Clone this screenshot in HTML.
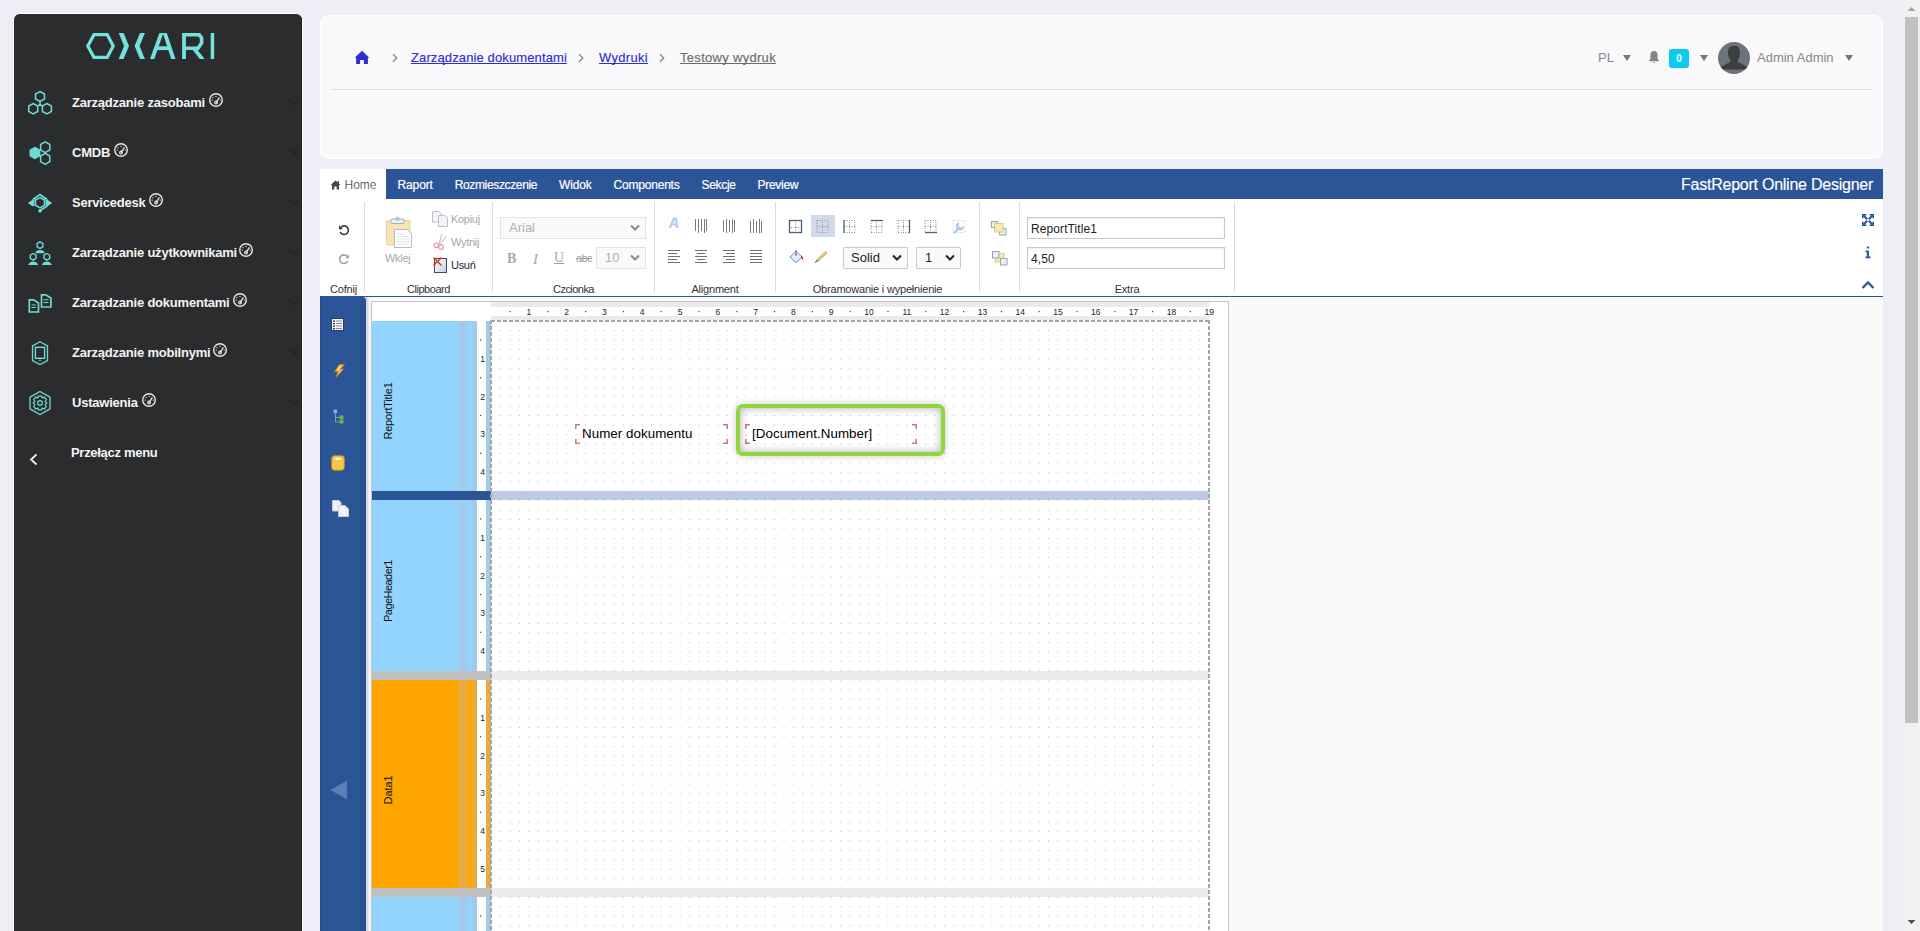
<!DOCTYPE html>
<html><head><meta charset="utf-8">
<style>
*{box-sizing:border-box;margin:0;padding:0}
html,body{width:1920px;height:931px;overflow:hidden;background:#eeeef6;font-family:"Liberation Sans",sans-serif;position:relative}
.a{position:absolute}
#sb{left:13px;top:13px;width:290px;height:930px;background:#2b2c2e;border:1px solid #fff;border-right:1px solid #fff;border-radius:7px 7px 0 0;overflow:hidden}
#sb .edge{position:absolute;right:0;top:0;width:1px;height:100%;background:#232426}
.mi{position:absolute;left:72px;color:#f4f4f4;font-weight:bold;font-size:13px;letter-spacing:-0.22px;white-space:nowrap}
.chev{position:absolute;left:276px;width:9px;height:9px;border-right:2px solid #222427;border-bottom:2px solid #222427;transform:rotate(45deg)}
#hdr{left:320px;top:15px;width:1563px;height:144px;background:#f9f9fc;border:1px solid #fff;border-radius:8px}
#tb{left:320px;top:169px;width:1563px;height:30px;background:#2b5597}
#rb{left:320px;top:199px;width:1563px;height:98px;background:#fff;border-bottom:1px solid #2b5597}
#ds{left:320px;top:297px;width:1563px;height:634px;background:#f9f9f9}
#scr{left:1903px;top:0;width:17px;height:931px;background:#f1f1f1}
.bc{font-size:13px;line-height:13px;color:#2d2dd3;text-decoration:underline;text-underline-offset:1.3px;-webkit-text-stroke:0.15px currentColor;white-space:nowrap;letter-spacing:0.12px}
.hdt{font-size:13px;line-height:13px;color:#878787;white-space:nowrap}
.tri{width:0;height:0;border-left:4px solid transparent;border-right:4px solid transparent;border-top:6px solid #777}
.tab{top:178px;font-size:12px;line-height:14px;color:#fff;-webkit-text-stroke:0.2px #fff;letter-spacing:-0.3px;white-space:nowrap}
.sep{top:202px;width:1px;height:90px;background:#dcdcdc}
.lbl{top:283px;font-size:11px;line-height:13px;color:#333;text-align:center;letter-spacing:-0.2px;white-space:nowrap}
.rbt{font-size:11px;line-height:13px;letter-spacing:-0.3px;white-space:nowrap}
.bc{text-decoration-skip-ink:none}
.sel{border:1px solid #e3e3e3;background:#fafafa;font-size:13px;line-height:20px;white-space:nowrap}
.sel2{border:1px solid #c9c9c9;background:#fafafa;font-size:13px;line-height:20px;color:#222;white-space:nowrap;border-radius:1px}
.inp{width:198px;height:22px;border:1px solid #c8c8c8;background:#fff;font-size:12px;line-height:22px;letter-spacing:0.1px;padding-left:3px;color:#222;box-shadow:inset 0 1px 2px rgba(0,0,0,0.08)}
.bl{font-size:11px;line-height:14px;color:#111;text-align:center;transform:rotate(-90deg);white-space:nowrap}
.obj{font-size:13.33px;line-height:16px;color:#000;white-space:nowrap;letter-spacing:0.06px}
</style></head><body>
<div id="sb" class="a"><div class="edge"></div></div>
<svg class="a" style="left:80px;top:25px" width="140" height="45" viewBox="0 0 140 45">
<g fill="#73e2dc">
<path d="M7.8,21 L14,9.6 H27.2 L33.2,21 L27.2,32.4 H14 Z" fill="none" stroke="#73e2dc" stroke-width="3.3" stroke-linejoin="miter"/>
<polygon points="38.7,8 43.6,8 49,21 43.6,34 38.7,34 44,21"/>
<polygon points="64.9,8 60,8 54.6,21 60,34 64.9,34 59.6,21"/>
<polygon points="79.4,8 83.4,8 74.3,34 70,34"/>
<polygon points="82.8,8 86.8,8 95.5,34 91.2,34"/>
<rect x="76.2" y="21.3" width="13.6" height="3.8"/>
<rect x="102.1" y="8" width="3.8" height="26"/>
<path d="M104,9.8 H119.2 L121.6,12.8 V18 L118,23.2 H104" fill="none" stroke="#73e2dc" stroke-width="3.6"/>
<polygon points="112.8,25 117.6,25 124.7,34 119.7,34"/>
<rect x="130.7" y="8" width="3.5" height="26"/>
</g></svg>
<!-- menu icons -->
<svg class="a" style="left:0;top:80px" width="60" height="400" viewBox="0 80 60 400" fill="none" stroke="#6fd9d4" stroke-width="1.5">
<!-- resources -->
<path d="M40,91.5 L44.5,94 V99 L40,101.5 L35.5,99 V94 Z"/>
<path d="M33.2,103.5 L37.7,106 V111.5 L33.2,114 L28.7,111.5 V106 Z"/>
<path d="M46.9,103.5 L51.4,106 V111.5 L46.9,114 L42.4,111.5 V106 Z"/>
<path d="M40,101.5 V104.5 M37.7,106 L40,104.5 L42.4,106"/>
<!-- cmdb -->
<path d="M34.9,147.5 L39.6,150.2 V155.8 L34.9,158.5 L30.2,155.8 V150.2 Z" fill="#6fd9d4"/>
<path d="M45.2,141.8 L49.8,144.5 V150 L45.2,152.7 L40.6,150 V144.5 Z"/>
<path d="M45.2,153.3 L49.8,156 V161.6 L45.2,164.3 L40.6,161.6 V156 Z"/>
<!-- servicedesk -->
<path d="M31.5,212 M33.5,206 V199 L40,194.5 L46.5,199 V206.5 L40,210.5" stroke-width="1.8"/>
<path d="M40,197.5 L44.5,200 V205.2 L40,207.8 L35.5,205.2 V200 Z"/>
<path d="M27.8,203 L33,199.5 V206.5 Z M52.2,203 L47,199.5 V206.5 Z" fill="#6fd9d4" stroke="none"/>
<circle cx="40" cy="211" r="1.8" fill="#6fd9d4" stroke="none"/>
<!-- users -->
<path d="M40,241.79999999999998 L42.85,243.45 V246.75 L40,248.4 L37.15,246.75 V243.45 Z" stroke-width="1.4"/><path d="M34.9,253.2 Q36.5,249.9 40,249.9 Q43.5,249.9 45.1,253.2 Z" fill="#6fd9d4" stroke="none"/><path d="M33.2,253.5 L36.050000000000004,255.15 V258.45 L33.2,260.1 L30.35,258.45 V255.15 Z" stroke-width="1.4"/><path d="M28.1,265 Q29.700000000000003,261.6 33.2,261.6 Q36.7,261.6 38.300000000000004,265 Z" fill="#6fd9d4" stroke="none"/><path d="M46.8,253.5 L49.65,255.15 V258.45 L46.8,260.1 L43.949999999999996,258.45 V255.15 Z" stroke-width="1.4"/><path d="M41.699999999999996,265 Q43.3,261.6 46.8,261.6 Q50.3,261.6 51.9,265 Z" fill="#6fd9d4" stroke="none"/>
<!-- documents -->
<path d="M29.3,299.8 H33.5 L38.5,303 V312 H29.3 Z" stroke-width="1.7"/>
<path d="M31.5,305 H36 M31.5,307.5 H36" stroke-width="1.1"/>
<path d="M41.5,294.8 H45.7 L50.9,298 V307 H41.5 Z" stroke-width="1.7"/>
<path d="M43.5,299.8 H48.5 M43.5,302.5 H48.5" stroke-width="1.1"/>
<!-- mobile -->
<path d="M40,341.8 L47.5,346 V360.5 L40,364.5 L32.5,360.5 V346 Z" stroke-width="1.3"/>
<rect x="35.4" y="347.3" width="9.2" height="11" stroke-width="1.4"/>
<circle cx="40" cy="360.3" r="0.9" fill="#6fd9d4" stroke="none"/>
<!-- settings -->
<path d="M40,391.5 L50,397.2 V408.8 L40,414.5 L30,408.8 V397.2 Z" stroke-width="1.3"/>
<circle cx="40" cy="403" r="2.3" stroke-width="1.2"/>
<path d="M38.3,396.2 L41.7,396.2 L42.3,398 L44.2,397 L46.3,399.5 L45.2,401.3 L46.8,403 L45.2,404.7 L46.3,406.5 L44.2,409 L42.3,408 L41.7,409.8 L38.3,409.8 L37.7,408 L35.8,409 L33.7,406.5 L34.8,404.7 L33.2,403 L34.8,401.3 L33.7,399.5 L35.8,397 L37.7,398 Z" stroke-width="1.2"/>
<!-- toggle -->
<path d="M36.5,454.5 L31,459.5 L36.5,464.5" stroke="#f0f0f0" stroke-width="1.8"/>
</svg>
<svg class="a" style="left:288px;top:98px" width="12" height="9" viewBox="0 0 12 9"><path d="M1.5,2 L6,6.5 L10.5,2" fill="none" stroke="#232528" stroke-width="1.8"/></svg><svg class="a" style="left:288px;top:148px" width="12" height="9" viewBox="0 0 12 9"><path d="M1.5,2 L6,6.5 L10.5,2" fill="none" stroke="#232528" stroke-width="1.8"/></svg><svg class="a" style="left:288px;top:198px" width="12" height="9" viewBox="0 0 12 9"><path d="M1.5,2 L6,6.5 L10.5,2" fill="none" stroke="#232528" stroke-width="1.8"/></svg><svg class="a" style="left:288px;top:248px" width="12" height="9" viewBox="0 0 12 9"><path d="M1.5,2 L6,6.5 L10.5,2" fill="none" stroke="#232528" stroke-width="1.8"/></svg><svg class="a" style="left:288px;top:298px" width="12" height="9" viewBox="0 0 12 9"><path d="M1.5,2 L6,6.5 L10.5,2" fill="none" stroke="#232528" stroke-width="1.8"/></svg><svg class="a" style="left:288px;top:348px" width="12" height="9" viewBox="0 0 12 9"><path d="M1.5,2 L6,6.5 L10.5,2" fill="none" stroke="#232528" stroke-width="1.8"/></svg><svg class="a" style="left:288px;top:398px" width="12" height="9" viewBox="0 0 12 9"><path d="M1.5,2 L6,6.5 L10.5,2" fill="none" stroke="#232528" stroke-width="1.8"/></svg>
<div class="mi" style="top:95px">Zarządzanie zasobami</div>
<div class="mi" style="top:145px">CMDB</div>
<div class="mi" style="top:195px">Servicedesk</div>
<div class="mi" style="top:245px">Zarządzanie użytkownikami</div>
<div class="mi" style="top:295px">Zarządzanie dokumentami</div>
<div class="mi" style="top:345px">Zarządzanie mobilnymi</div>
<div class="mi" style="top:395px">Ustawienia</div>
<div class="mi" style="top:445px;left:71px;letter-spacing:-0.3px">Przełącz menu</div>
<svg class="a" style="left:209.0px;top:92.6px" width="15" height="15" viewBox="0 0 15 15"><g stroke="#e6e6e6" fill="none"><circle cx="7" cy="7" r="6.3" stroke-width="1.4"/><path d="M7,9.6 L10.4,4.3" stroke-width="1.3"/><circle cx="7" cy="9.6" r="1.4" stroke-width="1.2"/></g><g fill="#e6e6e6"><circle cx="4" cy="4.6" r="0.7"/><circle cx="7" cy="3.4" r="0.7"/><circle cx="3.2" cy="7.1" r="0.7"/><circle cx="11.2" cy="7.1" r="0.7"/></g></svg>
<svg class="a" style="left:114px;top:143px" width="15" height="15" viewBox="0 0 15 15"><g stroke="#e6e6e6" fill="none"><circle cx="7" cy="7" r="6.3" stroke-width="1.4"/><path d="M7,9.6 L10.4,4.3" stroke-width="1.3"/><circle cx="7" cy="9.6" r="1.4" stroke-width="1.2"/></g><g fill="#e6e6e6"><circle cx="4" cy="4.6" r="0.7"/><circle cx="7" cy="3.4" r="0.7"/><circle cx="3.2" cy="7.1" r="0.7"/><circle cx="11.2" cy="7.1" r="0.7"/></g></svg>
<svg class="a" style="left:149.2px;top:193px" width="15" height="15" viewBox="0 0 15 15"><g stroke="#e6e6e6" fill="none"><circle cx="7" cy="7" r="6.3" stroke-width="1.4"/><path d="M7,9.6 L10.4,4.3" stroke-width="1.3"/><circle cx="7" cy="9.6" r="1.4" stroke-width="1.2"/></g><g fill="#e6e6e6"><circle cx="4" cy="4.6" r="0.7"/><circle cx="7" cy="3.4" r="0.7"/><circle cx="3.2" cy="7.1" r="0.7"/><circle cx="11.2" cy="7.1" r="0.7"/></g></svg>
<svg class="a" style="left:239.2px;top:243px" width="15" height="15" viewBox="0 0 15 15"><g stroke="#e6e6e6" fill="none"><circle cx="7" cy="7" r="6.3" stroke-width="1.4"/><path d="M7,9.6 L10.4,4.3" stroke-width="1.3"/><circle cx="7" cy="9.6" r="1.4" stroke-width="1.2"/></g><g fill="#e6e6e6"><circle cx="4" cy="4.6" r="0.7"/><circle cx="7" cy="3.4" r="0.7"/><circle cx="3.2" cy="7.1" r="0.7"/><circle cx="11.2" cy="7.1" r="0.7"/></g></svg>
<svg class="a" style="left:233px;top:293px" width="15" height="15" viewBox="0 0 15 15"><g stroke="#e6e6e6" fill="none"><circle cx="7" cy="7" r="6.3" stroke-width="1.4"/><path d="M7,9.6 L10.4,4.3" stroke-width="1.3"/><circle cx="7" cy="9.6" r="1.4" stroke-width="1.2"/></g><g fill="#e6e6e6"><circle cx="4" cy="4.6" r="0.7"/><circle cx="7" cy="3.4" r="0.7"/><circle cx="3.2" cy="7.1" r="0.7"/><circle cx="11.2" cy="7.1" r="0.7"/></g></svg>
<svg class="a" style="left:212.6px;top:343.2px" width="15" height="15" viewBox="0 0 15 15"><g stroke="#e6e6e6" fill="none"><circle cx="7" cy="7" r="6.3" stroke-width="1.4"/><path d="M7,9.6 L10.4,4.3" stroke-width="1.3"/><circle cx="7" cy="9.6" r="1.4" stroke-width="1.2"/></g><g fill="#e6e6e6"><circle cx="4" cy="4.6" r="0.7"/><circle cx="7" cy="3.4" r="0.7"/><circle cx="3.2" cy="7.1" r="0.7"/><circle cx="11.2" cy="7.1" r="0.7"/></g></svg>
<svg class="a" style="left:141.9px;top:393.4px" width="15" height="15" viewBox="0 0 15 15"><g stroke="#e6e6e6" fill="none"><circle cx="7" cy="7" r="6.3" stroke-width="1.4"/><path d="M7,9.6 L10.4,4.3" stroke-width="1.3"/><circle cx="7" cy="9.6" r="1.4" stroke-width="1.2"/></g><g fill="#e6e6e6"><circle cx="4" cy="4.6" r="0.7"/><circle cx="7" cy="3.4" r="0.7"/><circle cx="3.2" cy="7.1" r="0.7"/><circle cx="11.2" cy="7.1" r="0.7"/></g></svg>
<div id="hdr" class="a"></div>
<div class="a" style="left:331px;top:89px;width:1541px;height:1px;background:#dfe0e6"></div>
<svg class="a" style="left:354px;top:50px" width="16" height="15" viewBox="0 0 16 15"><path d="M8,0.8 L15.3,7.8 L13.9,7.8 V14 H9.9 V10 H6.1 V14 H2.1 V7.8 H0.7 Z" fill="#2d2dd3"/></svg>
<svg class="a" style="left:391px;top:53px" width="8" height="10" viewBox="0 0 8 10"><path d="M2,1.3 L5.8,5 L2,8.7" fill="none" stroke="#858585" stroke-width="1.2"/></svg>
<svg class="a" style="left:577px;top:53px" width="8" height="10" viewBox="0 0 8 10"><path d="M2,1.3 L5.8,5 L2,8.7" fill="none" stroke="#858585" stroke-width="1.2"/></svg>
<svg class="a" style="left:658px;top:53px" width="8" height="10" viewBox="0 0 8 10"><path d="M2,1.3 L5.8,5 L2,8.7" fill="none" stroke="#858585" stroke-width="1.2"/></svg>
<div class="a bc" style="left:411px;top:51px">Zarządzanie dokumentami</div>
<div class="a bc" style="left:599px;top:51px;letter-spacing:0.32px">Wydruki</div>
<div class="a bc" style="left:680px;top:51px;color:#6b6b6b;letter-spacing:0.3px">Testowy wydruk</div>
<div class="a hdt" style="left:1598px;top:51px">PL</div>
<div class="a tri" style="left:1623px;top:55px"></div>
<svg class="a" style="left:1647px;top:50px" width="14" height="14" viewBox="0 0 14 14"><path d="M7,1 C9.5,1 10.6,3 10.6,5.5 V8.8 L12.3,11.3 H1.7 L3.4,8.8 V5.5 C3.4,3 4.5,1 7,1 Z" fill="#858585"/><path d="M5.6,12.2 Q7,14 8.4,12.2 Z" fill="#858585"/></svg>
<div class="a" style="left:1669px;top:49px;width:20px;height:19px;border-radius:3px;background:#0dcaf0;color:#fff;font-weight:bold;font-size:10px;line-height:20px;text-align:center">0</div>
<div class="a tri" style="left:1700px;top:55px"></div>
<svg class="a" style="left:1718px;top:42px" width="32" height="32" viewBox="0 0 32 32"><defs><clipPath id="cav"><circle cx="16" cy="16" r="16"/></clipPath></defs><circle cx="16" cy="16" r="16" fill="#6c737a"/><g clip-path="url(#cav)" fill="#3e3e3e"><path d="M16,3.8 C20.6,3.8 22,7 22,11 C22,14.5 20.7,17 19.6,18.3 V20 L23.5,21.8 L29.5,25.2 V27.6 H2.5 V25.2 L8.5,21.8 L12.4,20 V18.3 C11.3,17 10,14.5 10,11 C10,7 11.4,3.8 16,3.8 Z"/></g></svg>
<div class="a hdt" style="left:1757px;top:51px">Admin Admin</div>
<div class="a tri" style="left:1845px;top:55px"></div>

<div id="tb" class="a"></div>
<div class="a" style="left:320px;top:169px;width:66px;height:31px;background:#fff"></div>
<svg class="a" style="left:330px;top:179.5px" width="11" height="10" viewBox="0 0 11 10"><path d="M5.5,0.5 L10.5,5 H9 V9.5 H6.7 V6.5 H4.3 V9.5 H2 V5 H0.5 Z" fill="#444"/><rect x="7.6" y="1" width="1.4" height="2.5" fill="#444"/></svg>
<div class="a tab" style="left:344.5px;color:#3a3a3a;letter-spacing:0px">Home</div>
<div class="a tab" style="left:397.5px;letter-spacing:-0.12px">Raport</div>
<div class="a tab" style="left:454.7px;letter-spacing:-0.35px">Rozmieszczenie</div>
<div class="a tab" style="left:559px;letter-spacing:-0.12px">Widok</div>
<div class="a tab" style="left:613.5px;letter-spacing:-0.2px">Components</div>
<div class="a tab" style="left:701.5px;letter-spacing:-0.32px">Sekcje</div>
<div class="a tab" style="left:757.5px;letter-spacing:-0.28px">Preview</div>
<div class="a" style="left:1681px;top:176.8px;font-size:16px;line-height:16px;color:#fff;-webkit-text-stroke:0.15px #fff;letter-spacing:-0.24px;white-space:nowrap">FastReport Online Designer</div>
<div id="rb" class="a"></div>
<!-- separators -->
<div class="a sep" style="left:364px"></div>
<div class="a sep" style="left:492px"></div>
<div class="a sep" style="left:654px"></div>
<div class="a sep" style="left:775px"></div>
<div class="a sep" style="left:979px"></div>
<div class="a sep" style="left:1019px"></div>
<div class="a sep" style="left:1234px"></div>
<!-- labels -->
<div class="a lbl" style="left:321.5px;width:44px">Cofnij</div>
<div class="a lbl" style="left:365px;width:127px;letter-spacing:-0.45px">Clipboard</div>
<div class="a lbl" style="left:493px;width:161px;letter-spacing:-0.55px">Czcionka</div>
<div class="a lbl" style="left:655px;width:120px">Alignment</div>
<div class="a lbl" style="left:776px;width:203px">Obramowanie i wypełnienie</div>
<div class="a lbl" style="left:1020px;width:214px">Extra</div>
<!-- undo/redo -->
<svg class="a" style="left:338px;top:224px" width="12" height="12" viewBox="0 0 12 12"><path d="M3,3.2 A4.3,4.3 0 1 1 2.2,8" fill="none" stroke="#333" stroke-width="1.6"/><path d="M1,1.3 V5.2 H4.9 Z" fill="#333"/></svg>
<svg class="a" style="left:338px;top:253px" width="12" height="12" viewBox="0 0 12 12"><path d="M9,3.2 A4.3,4.3 0 1 0 9.8,8" fill="none" stroke="#a0a0a0" stroke-width="1.6"/><path d="M11,1.3 V5.2 H7.1 Z" fill="#a0a0a0"/></svg>
<!-- paste -->
<svg class="a" style="left:385px;top:216px" width="28" height="34" viewBox="0 0 28 34"><rect x="1.5" y="4.5" width="23.5" height="24.5" rx="1.5" fill="#f9e3b4" stroke="#e6cf9c"/><rect x="6" y="3" width="13" height="4.5" rx="1" fill="#eef0f3" stroke="#a8b0bb"/><circle cx="12.5" cy="2.8" r="1.6" fill="none" stroke="#a8b0bb"/><path d="M9.5,13.5 H22 L26.5,18 V31.5 H9.5 Z" fill="#fff" stroke="#b5bcc8"/><path d="M12,18 H19 M12,20.5 H24 M12,23 H24 M12,25.5 H24 M12,28 H24" stroke="#d5d9df" stroke-width="0.8"/></svg>
<div class="a rbt" style="left:385px;top:252px;color:#a8a8a8">Wklej</div>
<!-- copy -->
<svg class="a" style="left:431px;top:210px" width="18" height="18" viewBox="0 0 18 18"><path d="M1.5,1.5 H8 L10,3.5 V12 H1.5 Z" fill="#f3f4f7" stroke="#b8bec9"/><path d="M7.5,5.5 H14 L16.5,8 V16.5 H7.5 Z" fill="#f3f4f7" stroke="#b8bec9"/></svg>
<div class="a rbt" style="left:451px;top:213px;color:#a6a6a6">Kopiuj</div>
<!-- cut -->
<svg class="a" style="left:433px;top:233px" width="15" height="17" viewBox="0 0 15 17"><path d="M6,11 L9,1 M7.5,10.5 L13.5,3" stroke="#b6c4d8" stroke-width="1.1" fill="none"/><circle cx="3.3" cy="12.3" r="2.3" fill="none" stroke="#e29a9a" stroke-width="1.2"/><circle cx="8" cy="14" r="2.3" fill="none" stroke="#e29a9a" stroke-width="1.2"/></svg>
<div class="a rbt" style="left:451px;top:236px;color:#a6a6a6">Wytnij</div>
<!-- delete -->
<svg class="a" style="left:432px;top:256px" width="16" height="18" viewBox="0 0 16 18"><defs><linearGradient id="dg2" x1="0" y1="0" x2="1" y2="1"><stop offset="0" stop-color="#fff"/><stop offset="1" stop-color="#c9d0e0"/></linearGradient></defs><rect x="2.5" y="2.5" width="12" height="14" fill="url(#dg2)" stroke="#3f4a5e"/><path d="M1.5,1.5 L9.5,9.5 M9.5,1.5 L1.5,9.5" stroke="#e8321c" stroke-width="1.5"/></svg>
<div class="a rbt" style="left:451px;top:259px;color:#1c1c3c">Usuń</div>

<!-- font -->
<div class="a sel" style="left:500px;top:217px;width:146px;height:22px;color:#b0b0b0;padding-left:8px">Arial</div>
<svg class="a" style="left:630px;top:224px" width="10" height="8" viewBox="0 0 10 8"><path d="M1,1.5 L5,5.5 L9,1.5" fill="none" stroke="#8a8a8a" stroke-width="2"/></svg>
<div class="a sel" style="left:596px;top:247px;width:50px;height:22px;color:#b0b0b0;padding-left:8px">10</div>
<svg class="a" style="left:630px;top:254px" width="10" height="8" viewBox="0 0 10 8"><path d="M1,1.5 L5,5.5 L9,1.5" fill="none" stroke="#8a8a8a" stroke-width="2"/></svg>
<div class="a" style="left:507px;top:251px;font-family:'Liberation Serif',serif;font-weight:bold;font-size:14px;line-height:16px;color:#a9a9a9">B</div>
<div class="a" style="left:533px;top:251px;font-family:'Liberation Serif',serif;font-style:italic;font-size:15px;line-height:16px;color:#a9a9a9">I</div>
<div class="a" style="left:554px;top:250px;font-family:'Liberation Serif',serif;font-size:14px;line-height:16px;color:#a9a9a9;text-decoration:underline;text-decoration-color:#9a9a9a">U</div>
<div class="a" style="left:576px;top:252px;font-size:11px;line-height:13px;color:#a0a0a0;text-decoration:line-through;letter-spacing:-0.6px">abc</div>
<!-- alignment -->
<svg class="a" style="left:667px;top:216px" width="14" height="14" viewBox="0 0 14 14"><path d="M1.5,12 L6,1.5 H10 L11.5,12 H8.8 L8.5,9.5 H5.2 L4.2,12 Z M6,7.5 H8.3 L8,4 Z" fill="#b7cff0" fill-rule="evenodd"/></svg>
<svg class="a" style="left:690px;top:215.5px" width="80" height="20" viewBox="690 214 80 20" stroke="#7a7a7a" stroke-width="1" fill="none"><path d="M695.5,217 V229 M698.5,217 V231 M701.5,217 V229 M704.5,217 V231 M706.5,217 V229"/><path d="M723.5,218 V230 M726.5,217 V231 M729.5,218 V230 M732.5,217 V231 M734.5,218 V230"/><path d="M750.5,219 V231 M753.5,217 V231 M756.5,219 V231 M759.5,217 V231 M761.5,219 V231"/></svg>
<svg class="a" style="left:660px;top:246px" width="110" height="20" viewBox="660 246 110 20" stroke="#6f6f6f" stroke-width="1" fill="none"><path d="M668,250.5 H680 M668,253.5 H677 M668,256.5 H680 M668,259.5 H677 M668,262.5 H680 "/><path d="M695,250.5 H707 M697,253.5 H705 M695,256.5 H707 M697,259.5 H705 M695,262.5 H707 "/><path d="M723,250.5 H735 M726,253.5 H735 M723,256.5 H735 M726,259.5 H735 M723,262.5 H735 "/><path d="M750,250.5 H762 M750,253.5 H762 M750,256.5 H762 M750,259.5 H762 M750,262.5 H762 "/></svg>
<!-- borders -->
<div class="a" style="left:811px;top:215px;width:24px;height:22px;background:#cfdbeb"></div>
<svg class="a" style="left:788px;top:219px" width="180" height="16" viewBox="0 0 180 16">
<g fill="none" stroke="#8a8a8a" stroke-width="1" stroke-dasharray="1,1.5">
<path d="M7.5,3 V13 M3,8.5 H12"/>
<path d="M29,1.5 H40 V13.5 H29 Z M34.5,3 V13 M29,7.5 H40"/>
<path d="M56,1.5 H67 V13.5 M56,13.5 H67 M61.5,3 V13 M56,7.5 H67"/>
<path d="M83,13.5 H94 V1.5 M83,1.5 V13.5 M88.5,3 V13 M83,7.5 H94"/>
<path d="M110,1.5 H121 M110,13.5 H121 M110,1.5 V13.5 M115.5,3 V13 M110,7.5 H121"/>
<path d="M137,1.5 H148 V13.5 M137,1.5 V13.5 M142.5,3 V13 M137,7.5 H148"/>
<path d="M165,1.5 H177 V13.5 H165 Z" stroke="#c8c8c8"/>
</g>
<g fill="none" stroke="#4e5d73" stroke-width="1.3">
<rect x="1.5" y="1.5" width="12" height="12"/>
<path d="M56,1 V14"/>
<path d="M83,1.5 H95"/>
<path d="M121.5,1 V14"/>
<path d="M137,13.5 H149"/>
</g>
<path d="M166,14 L172,8 M171,4.5 A3,3 0 1 0 175,7.5" stroke="#a9c0e3" stroke-width="2" fill="none"/>
</svg>
<svg class="a" style="left:789px;top:249px" width="40" height="16" viewBox="0 0 40 16"><path d="M1,8 L7,2.5 L13,8 L7,13.5 Z" fill="#e5eefb" stroke="#6f8fbf"/><path d="M7,1 V7" stroke="#555" stroke-width="1"/><path d="M12,6.5 Q15,8 14,11 L12.5,9.5 Z" fill="#d62b1f"/><path d="M26,13.5 L28.5,10 L36.5,2.5 L38,4 L30,11.5 Z" fill="#e8c86a" stroke="#b59240" stroke-width="0.6"/><path d="M25.5,14 L28,10.5 L30,12 Z" fill="#6a8fcf"/></svg>
<div class="a sel2" style="left:843px;top:247px;width:65px;height:22px;padding-left:7px">Solid</div>
<svg class="a" style="left:892px;top:253px" width="10" height="10" viewBox="0 0 10 10"><path d="M1,2.5 L5,6.5 L9,2.5" fill="none" stroke="#222" stroke-width="2"/></svg>
<div class="a sel2" style="left:916px;top:247px;width:45px;height:22px;padding-left:8px">1</div>
<svg class="a" style="left:945px;top:253px" width="10" height="10" viewBox="0 0 10 10"><path d="M1,2.5 L5,6.5 L9,2.5" fill="none" stroke="#222" stroke-width="2"/></svg>
<!-- arrange -->
<svg class="a" style="left:990px;top:220px" width="18" height="46" viewBox="0 0 18 46">
<rect x="1.5" y="1.5" width="6" height="6" fill="#eef0f3" stroke="#9aa4b3"/>
<rect x="9.5" y="8.5" width="6.5" height="6.5" fill="#eef0f3" stroke="#9aa4b3"/>
<rect x="4.5" y="3.5" width="8.5" height="8.5" fill="#fbeab0" stroke="#dcc68a"/>
<rect x="5.5" y="33.5" width="8.5" height="8.5" fill="#fbeab0" stroke="#dcc68a"/>
<rect x="2.5" y="31.5" width="6.5" height="6.5" fill="#eef0f3" stroke="#9aa4b3"/>
<rect x="10.5" y="38.5" width="6.5" height="6.5" fill="#eef0f3" stroke="#9aa4b3"/>
</svg>
<div class="a inp" style="left:1027px;top:217px">ReportTitle1</div>
<div class="a inp" style="left:1027px;top:247px">4,50</div>
<!-- right icons -->
<svg class="a" style="left:1861px;top:213px" width="14" height="14" viewBox="0 0 14 14" fill="#2c5ba0"><path d="M1,1 H6 L4.3,2.7 L7,5.4 L5.4,7 L2.7,4.3 L1,6 Z"/><path d="M13,1 V6 L11.3,4.3 L8.6,7 L7,5.4 L9.7,2.7 L8,1 Z"/><path d="M1,13 V8 L2.7,9.7 L5.4,7 L7,8.6 L4.3,11.3 L6,13 Z"/><path d="M13,13 H8 L9.7,11.3 L7,8.6 L8.6,7 L11.3,9.7 L13,8 Z"/></svg>
<svg class="a" style="left:1864px;top:245.5px" width="8" height="13" viewBox="0 0 8 13" fill="#2c5ba0"><rect x="2.8" y="0.5" width="2.2" height="2"/><path d="M1.5,4.5 H5 V10.5 H6.5 V12.3 H1.5 V10.5 H2.8 V6.3 H1.5 Z"/></svg>
<svg class="a" style="left:1861px;top:279.8px" width="14" height="10" viewBox="0 0 14 10"><path d="M1.5,8 L7,2.5 L12.5,8" fill="none" stroke="#2c5ba0" stroke-width="2.4"/></svg>

<div id="ds" class="a"></div>
<div class="a" style="left:320px;top:297px;width:46px;height:634px;background:#2b5597;border-top-right-radius:4px;overflow:hidden"><div style="position:absolute;left:39px;top:0;width:7px;height:100%;background:#29528f"></div><div style="position:absolute;left:0;top:0;width:1px;height:100%;background:#234f93"></div></div>
<div class="a" style="left:366px;top:297px;width:5px;height:634px;background:linear-gradient(90deg,#c9d0dc,#f3f4f7 70%,#f9f9f9)"></div>
<svg class="a" style="left:331px;top:318px" width="14" height="14" viewBox="0 0 14 14"><rect x="0.5" y="0.5" width="12" height="12" fill="#f4f6fa" stroke="#2c3a66"/><g fill="#333"><rect x="2" y="2.5" width="2" height="1.3"/><rect x="2" y="5" width="2" height="1.3"/><rect x="2" y="7.5" width="2" height="1.3"/><rect x="2" y="10" width="2" height="1.3"/></g><g fill="#888"><rect x="5" y="2.5" width="6" height="1"/><rect x="5" y="5" width="6" height="1"/><rect x="5" y="7.5" width="6" height="1"/><rect x="5" y="10" width="6" height="1"/></g></svg>
<svg class="a" style="left:333px;top:364px" width="12" height="14" viewBox="0 0 12 14"><path d="M6.5,0.5 H11.5 L7.5,5 H10.5 L3,13.5 L5,7.5 H1.5 Z" fill="#f2b84b" stroke="#c77d22" stroke-width="0.8"/><path d="M7,2 L4.5,6.5" stroke="#fff3c4" stroke-width="1"/></svg>
<svg class="a" style="left:333px;top:409px" width="12" height="15" viewBox="0 0 12 15"><rect x="0.5" y="0.5" width="3.5" height="3.5" fill="#7fb0ec"/><path d="M2.5,4 V13 H6 M2.5,8.5 H6" fill="none" stroke="#9a9a9a" stroke-width="1"/><rect x="6.5" y="6.5" width="4" height="4" fill="#5ec04a"/><rect x="6.5" y="11" width="4" height="3.5" fill="#5ec04a"/></svg>
<svg class="a" style="left:331px;top:455px" width="14" height="16" viewBox="0 0 14 16"><rect x="0.7" y="0.7" width="12.6" height="14.6" rx="3" fill="#f6c94a" stroke="#c98d14" stroke-width="1"/><ellipse cx="7" cy="3.8" rx="4.6" ry="2" fill="#fff0b8" stroke="#d49b20" stroke-width="0.7"/><rect x="2.6" y="5" width="8.8" height="8.5" fill="#f3c84e" opacity="0.6"/></svg>
<svg class="a" style="left:332px;top:500px" width="18" height="17" viewBox="0 0 18 17"><path d="M0.5,0.5 H7 L9,2.5 V11 H0.5 Z" fill="#f0f2f6" stroke="#c8ced8"/><path d="M6.5,5.5 H13 L16.5,9 V16.5 H6.5 Z" fill="#eef1f5" stroke="#c8ced8"/></svg>
<svg class="a" style="left:330px;top:780px" width="18" height="20" viewBox="0 0 18 20"><path d="M17,0.5 V19.5 L0.5,10 Z" fill="#5b7fb5"/></svg>
<div class="a" style="left:371px;top:301px;width:858px;height:640px;background:#fff;border:1px solid #c4c4c4"></div>
<div class="a" style="left:491px;top:302px;width:718px;height:5px;background:#ebebeb"></div>
<div class="a" style="left:491px;top:316px;width:718px;height:4px;background:#ebebeb"></div>
<div class="a" style="left:372px;top:321px;width:86px;height:170px;background:#92d4fd"></div>
<div class="a" style="left:458px;top:321px;width:9px;height:170px;background:#a0cbea"></div>
<div class="a" style="left:467px;top:321px;width:5px;height:170px;background:#92d4fd"></div>
<div class="a" style="left:472px;top:321px;width:5px;height:170px;background:#a0cbea"></div>
<div class="a" style="left:486px;top:321px;width:5px;height:170px;background:#a0cbea"></div>
<div class="a" style="left:372px;top:500px;width:86px;height:171px;background:#92d4fd"></div>
<div class="a" style="left:458px;top:500px;width:9px;height:171px;background:#a0cbea"></div>
<div class="a" style="left:467px;top:500px;width:5px;height:171px;background:#92d4fd"></div>
<div class="a" style="left:472px;top:500px;width:5px;height:171px;background:#a0cbea"></div>
<div class="a" style="left:486px;top:500px;width:5px;height:171px;background:#a0cbea"></div>
<div class="a" style="left:372px;top:680px;width:86px;height:208px;background:#ffa500"></div>
<div class="a" style="left:458px;top:680px;width:9px;height:208px;background:#e7ab42"></div>
<div class="a" style="left:467px;top:680px;width:5px;height:208px;background:#ffa500"></div>
<div class="a" style="left:472px;top:680px;width:5px;height:208px;background:#e7ab42"></div>
<div class="a" style="left:486px;top:680px;width:5px;height:208px;background:#e7ab42"></div>
<div class="a" style="left:372px;top:897px;width:86px;height:40px;background:#92d4fd"></div>
<div class="a" style="left:458px;top:897px;width:9px;height:40px;background:#a0cbea"></div>
<div class="a" style="left:467px;top:897px;width:5px;height:40px;background:#92d4fd"></div>
<div class="a" style="left:472px;top:897px;width:5px;height:40px;background:#a0cbea"></div>
<div class="a" style="left:486px;top:897px;width:5px;height:40px;background:#a0cbea"></div>
<div class="a" style="left:372px;top:491px;width:119px;height:9px;background:#2b5597"></div>
<div class="a" style="left:491px;top:491px;width:718px;height:9px;background:#bccadf"></div>
<div class="a" style="left:372px;top:671px;width:119px;height:9px;background:#c0c0c0"></div>
<div class="a" style="left:491px;top:671px;width:718px;height:9px;background:#ebebeb"></div>
<div class="a" style="left:372px;top:888px;width:119px;height:9px;background:#c0c0c0"></div>
<div class="a" style="left:491px;top:888px;width:718px;height:9px;background:#ebebeb"></div>
<svg class="a" style="left:491px;top:321px" width="718" height="610" viewBox="0 0 718 610"><defs><pattern id="dg" x="9" y="9" width="9.45" height="9.45" patternUnits="userSpaceOnUse"><rect x="0" y="0" width="1" height="1" fill="#b8b8b8"/></pattern></defs><rect x="0" y="0" width="718" height="610" fill="url(#dg)"/></svg>
<div class="a" style="left:491px;top:320px;width:719px;height:2px;background:repeating-linear-gradient(90deg,#a5a5a5 0 4px,transparent 4px 6px)"></div>
<div class="a" style="left:490px;top:320px;width:2px;height:611px;background:repeating-linear-gradient(180deg,#a5a5a5 0 4px,transparent 4px 6px)"></div>
<div class="a" style="left:1208px;top:320px;width:2px;height:611px;background:repeating-linear-gradient(180deg,#a5a5a5 0 4px,transparent 4px 6px)"></div>
<svg class="a" style="left:371px;top:300px" width="860" height="631" viewBox="371 300 860 631"><g style="font-family:'Liberation Sans',sans-serif" font-size="8.5" fill="#222" text-anchor="middle"><text x="528.8" y="315">1</text><text x="566.6" y="315">2</text><text x="604.4" y="315">3</text><text x="642.2" y="315">4</text><text x="680.0" y="315">5</text><text x="717.8" y="315">6</text><text x="755.6" y="315">7</text><text x="793.4" y="315">8</text><text x="831.2" y="315">9</text><text x="869.0" y="315">10</text><text x="906.8" y="315">11</text><text x="944.6" y="315">12</text><text x="982.4" y="315">13</text><text x="1020.2" y="315">14</text><text x="1058.0" y="315">15</text><text x="1095.8" y="315">16</text><text x="1133.6" y="315">17</text><text x="1171.4" y="315">18</text><text x="1209.2" y="315">19</text></g><g fill="#7a2a2a"><rect x="509.4" y="311" width="1.2" height="1.2"/><rect x="547.2" y="311" width="1.2" height="1.2"/><rect x="585.0" y="311" width="1.2" height="1.2"/><rect x="622.8" y="311" width="1.2" height="1.2"/><rect x="660.6" y="311" width="1.2" height="1.2"/><rect x="698.4" y="311" width="1.2" height="1.2"/><rect x="736.2" y="311" width="1.2" height="1.2"/><rect x="774.0" y="311" width="1.2" height="1.2"/><rect x="811.8" y="311" width="1.2" height="1.2"/><rect x="849.6" y="311" width="1.2" height="1.2"/><rect x="887.4" y="311" width="1.2" height="1.2"/><rect x="925.2" y="311" width="1.2" height="1.2"/><rect x="963.0" y="311" width="1.2" height="1.2"/><rect x="1000.8" y="311" width="1.2" height="1.2"/><rect x="1038.6" y="311" width="1.2" height="1.2"/><rect x="1076.4" y="311" width="1.2" height="1.2"/><rect x="1114.2" y="311" width="1.2" height="1.2"/><rect x="1152.0" y="311" width="1.2" height="1.2"/><rect x="1189.8" y="311" width="1.2" height="1.2"/><rect x="480" y="339.3" width="1.2" height="1.2"/><rect x="480" y="377.1" width="1.2" height="1.2"/><rect x="480" y="414.9" width="1.2" height="1.2"/><rect x="480" y="452.7" width="1.2" height="1.2"/><rect x="480" y="518.3" width="1.2" height="1.2"/><rect x="480" y="556.1" width="1.2" height="1.2"/><rect x="480" y="593.9" width="1.2" height="1.2"/><rect x="480" y="631.7" width="1.2" height="1.2"/><rect x="480" y="698.3" width="1.2" height="1.2"/><rect x="480" y="736.1" width="1.2" height="1.2"/><rect x="480" y="773.9" width="1.2" height="1.2"/><rect x="480" y="811.7" width="1.2" height="1.2"/><rect x="480" y="849.5" width="1.2" height="1.2"/><rect x="480" y="915.3" width="1.2" height="1.2"/></g><g style="font-family:'Liberation Sans',sans-serif" font-size="8.5" fill="#222" text-anchor="middle"><text x="482.5" y="361.8">1</text><text x="482.5" y="399.6">2</text><text x="482.5" y="437.4">3</text><text x="482.5" y="475.2">4</text><text x="482.5" y="540.8">1</text><text x="482.5" y="578.6">2</text><text x="482.5" y="616.4">3</text><text x="482.5" y="654.2">4</text><text x="482.5" y="720.8">1</text><text x="482.5" y="758.6">2</text><text x="482.5" y="796.4">3</text><text x="482.5" y="834.2">4</text><text x="482.5" y="872.0">5</text></g></svg>
<div class="a bl" style="left:328px;top:404px;width:120px;letter-spacing:-0.2px">ReportTitle1</div>
<div class="a bl" style="left:328px;top:584px;width:120px;letter-spacing:-0.55px">PageHeader1</div>
<div class="a bl" style="left:328px;top:782.7px;width:120px;letter-spacing:-0.1px">Data1</div>
<svg class="a" style="left:574px;top:423px" width="356" height="23" viewBox="574 423 356 23" fill="none" stroke="#d27b7b" stroke-width="1.6"><path d="M580,424.8 H575.8 V429 M575.8,439 V443.2 H580"/><path d="M723,424.8 H727.2 V429 M727.2,439 V443.2 H723"/><path d="M750,424.8 H745.8 V429 M745.8,439 V443.2 H750"/><path d="M912,424.8 H916.2 V429 M916.2,439 V443.2 H912"/></svg>
<div class="a" style="left:736px;top:404px;width:209px;height:52px;border:4.6px solid #91d540;border-radius:7px;box-shadow:0 0 7px rgba(0,0,0,0.22),inset 0 0 8px rgba(0,0,0,0.32)"></div>
<div class="a obj" style="left:582px;top:425.5px">Numer dokumentu</div>
<div class="a obj" style="left:752px;top:425.5px">[Document.Number]</div>
<div id="scr" class="a"></div>
<div class="a" style="left:1905px;top:17px;width:13px;height:706px;background:#c1c1c1"></div>
<svg class="a" style="left:1903px;top:0" width="17" height="931" viewBox="0 0 17 931"><path d="M4.5,11 L8.5,7 L12.5,11 Z" fill="#a3a3a3"/><path d="M4.5,920 L8.5,924 L12.5,920 Z" fill="#505050"/></svg>
</body></html>
